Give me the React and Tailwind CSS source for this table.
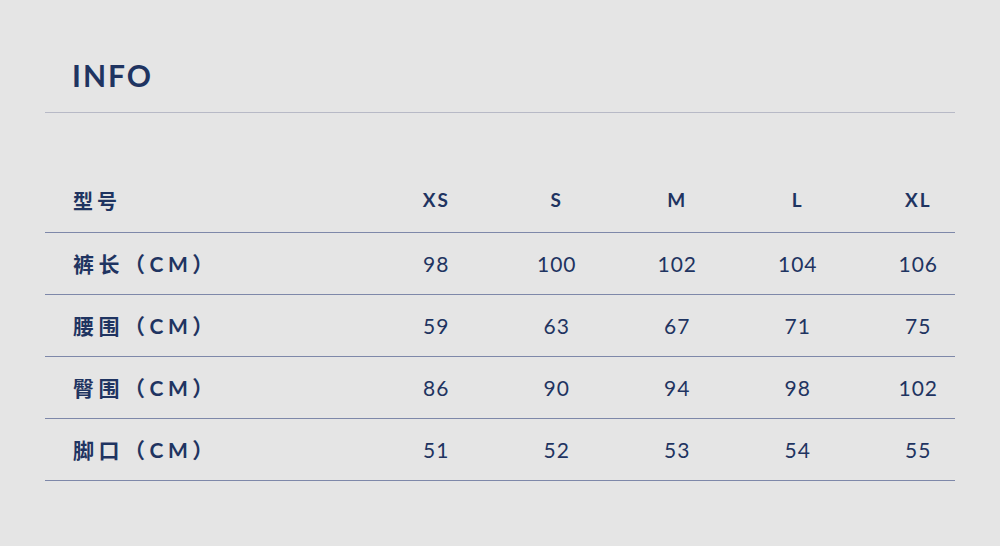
const sizes = ["XS", "S", "M", "L", "XL"];

const rows = [
  { label: "裤长（CM）", values: [98, 100, 102, 104, 106] },
  { label: "腰围（CM）", values: [59, 63, 67, 71, 75] },
  { label: "臀围（CM）", values: [86, 90, 94, 98, 102] },
  { label: "脚口（CM）", values: [51, 52, 53, 54, 55] },
];

const font = { fontFamily: '"Lato", "Noto Sans CJK SC", sans-serif' };

const App = () => {
  return (
    <div className="w-[1000px] h-[546px] bg-[#e5e5e5] text-[#1f3461] px-[45px] pt-[56px]" style={font}>
      {/* Title */}
      <div className="border-b border-[#b7b9c6] pb-[18px]">
        <h1 className="pl-[27px] text-[30px] leading-[38px] font-bold tracking-[2px]">INFO</h1>
      </div>

      {/* Size table */}
      <div className="mt-[58px]">
        <div className="grid grid-cols-[331px_repeat(5,120.5px)] h-[62px] items-center border-b border-[#7e88a9] pb-[2px]">
          <div className="pl-[28px] text-[20px] font-bold tracking-[4px]">型号</div>
          {sizes.map((s) => (
            <div key={s} className="text-center text-[19px] font-bold tracking-[2px]">
              {s}
            </div>
          ))}
        </div>
        {rows.map((row) => (
          <div
            key={row.label}
            className="grid grid-cols-[331px_repeat(5,120.5px)] h-[62px] items-center border-b border-[#7e88a9]"
          >
            <div className="pl-[28px] text-[21px] font-bold tracking-[4.5px]">{row.label}</div>
            {row.values.map((v, i) => (
              <div key={i} className="text-center text-[21px] font-normal tracking-[1px]">
                {v}
              </div>
            ))}
          </div>
        ))}
      </div>
    </div>
  );
};

export default App;
